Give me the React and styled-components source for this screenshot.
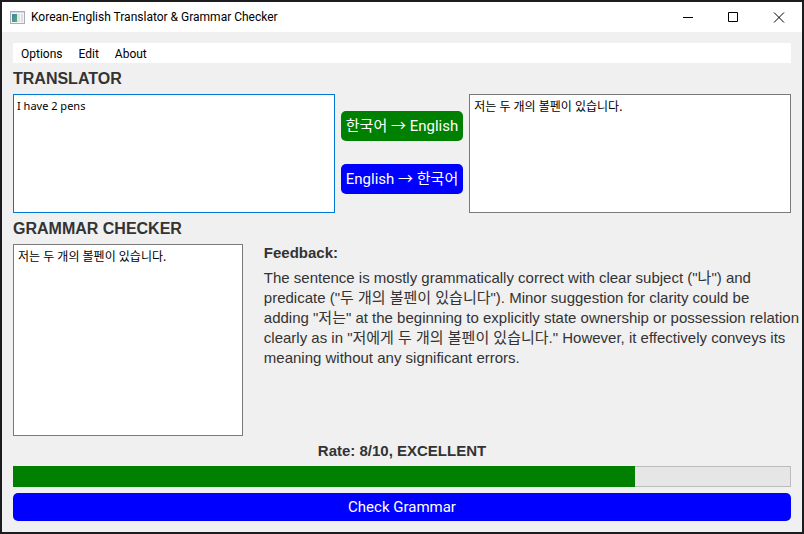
import React, { useState } from "react";
import styled, { createGlobalStyle } from "styled-components";

const uiFont = `Roboto, "Noto Sans CJK KR", sans-serif`;
const inputFont = `"Noto Sans", "Noto Sans CJK KR", sans-serif`;
const textFont = `"Liberation Sans", "Noto Sans CJK KR", sans-serif`;

const GlobalStyle = createGlobalStyle`
  * { box-sizing: border-box; }
  body { margin: 0; background: #1c1c1c; }
`;

const Desktop = styled.div`
  display: flex;
  min-height: 100vh;
  padding: 2px;
  background: #1c1b1d;
`;

const Window = styled.div`
  flex: 1;
  min-width: 0;
  display: flex;
  flex-direction: column;
  background: #f0f0f0;
  color: #000;
  font: 12px/16px ${uiFont};
`;

const TitleBar = styled.header`
  display: flex;
  align-items: center;
  height: 30px;
  padding-left: 8px;
  background: #fff;
`;

const Title = styled.h1`
  flex: 1;
  margin: 0 0 0 6px;
  font: 12px/16px ${uiFont};
`;

const CaptionButton = styled.button`
  display: grid;
  place-items: center;
  width: 45px;
  height: 30px;
  padding: 0;
  border: 0;
  background: transparent;
`;

const Content = styled.main`
  flex: 1;
  display: flex;
  flex-direction: column;
  padding: 11px;
`;

const MenuBar = styled.nav`
  display: flex;
  height: 20px;
  background: #fff;
`;

const MenuItem = styled.button`
  padding: 2px 8px 0;
  border: 0;
  background: #fff;
  color: #000;
  font: 12px/16px ${uiFont};
`;

const SectionTitle = styled.h2`
  margin: 0;
  padding: 6px 0 5px;
  color: #333;
  font: bold 16px/20px ${textFont};
`;

const TranslatorRow = styled.section`
  display: grid;
  grid-template-columns: minmax(0, 1fr) auto minmax(0, 1fr);
  gap: 6px;
  height: 119px;
`;

const Directions = styled.div`
  display: flex;
  flex-direction: column;
  justify-content: center;
  gap: 23px;
  padding-bottom: 2px;
`;

const TextBox = styled.textarea`
  display: block;
  width: 100%;
  height: 100%;
  padding: ${(p) => (p.$korean ? "4px 4px" : "3px 3px")};
  border: 1px solid ${(p) => (p.$active ? "#0078d7" : "#7a7a7a")};
  border-radius: 0;
  outline: 0;
  resize: none;
  background: #fff;
  color: #000;
  font: ${(p) => (p.$korean ? 12 : 11)}px/16px ${inputFont};
`;

const ActionButton = styled.button`
  height: ${(p) => (p.$tall ? 30 : 28)}px;
  padding: 4px 5px;
  border: 0;
  border-radius: 5px;
  background: ${(p) => p.$color};
  color: #fff;
  font: 15px/20px ${uiFont};
  white-space: nowrap;
`;

const GrammarRow = styled.section`
  flex: 1;
  display: grid;
  grid-template-columns: minmax(0, 3fr) minmax(0, 7fr);
  gap: 12px;
`;

const Feedback = styled.article`
  margin-right: -10px;
  padding-left: 9px;
  color: #333;
`;

const FeedbackTitle = styled.h3`
  margin: 0 0 6px;
  font: bold 15px/18px ${textFont};
`;

const FeedbackText = styled.p`
  margin: 0;
  font: 15px/20px ${textFont};
`;

const Rate = styled.label`
  padding: 5px 0;
  color: #333;
  text-align: center;
  font: bold 15px/20px ${textFont};
`;

const Score = styled.progress`
  appearance: none;
  display: block;
  width: 100%;
  height: 21px;
  margin-bottom: 6px;
  border: 0;
  &::-webkit-progress-bar {
    background: #e6e6e6;
    box-shadow: inset 0 0 0 1px #bcbcbc;
  }
  &::-webkit-progress-value {
    background: #008000;
  }
`;

const AppIcon = () => (
  <svg width="15" height="13" viewBox="0 0 15 13" aria-hidden="true">
    <defs>
      <linearGradient id="pane" x1="0" y1="0" x2="1" y2="1">
        <stop offset="0" stopColor="#3f7fae" />
        <stop offset="1" stopColor="#58b06a" />
      </linearGradient>
    </defs>
    <rect width="15" height="13" fill="#a9adb5" />
    <rect x="1" y="1" width="13" height="1" fill="#d5d9e0" />
    <rect x="1" y="2" width="13" height="10" fill="#f4f5f7" />
    <rect x="2" y="3" width="5" height="8" fill="url(#pane)" />
    <rect x="7" y="3" width="3" height="8" fill="#e2e4e8" />
    <rect x="11" y="3" width="2" height="8" fill="#d9dde0" />
  </svg>
);

const CaptionIcon = ({ d }) => (
  <svg width="13" height="11" viewBox="0 0 13 11" fill="none" stroke="#000" aria-hidden="true">
    <path d={d} />
  </svg>
);

const SENTENCE = "저는 두 개의 볼펜이 있습니다.";

export default function App() {
  const [source, setSource] = useState("I have 2 pens");
  const [target, setTarget] = useState(SENTENCE);
  const [checked, setChecked] = useState(SENTENCE);
  return (
    <Desktop>
      <GlobalStyle />
      <Window>
        <TitleBar>
          <AppIcon />
          <Title>Korean-English Translator &amp; Grammar Checker</Title>
          <CaptionButton aria-label="Minimize"><CaptionIcon d="M0 5.5H10" /></CaptionButton>
          <CaptionButton aria-label="Maximize"><CaptionIcon d="M.5 .5H9.5V9.5H.5Z" /></CaptionButton>
          <CaptionButton aria-label="Close"><CaptionIcon d="M1 .5L11 10.5M11 .5L1 10.5" /></CaptionButton>
        </TitleBar>
        <Content>
          <MenuBar>
            <MenuItem>Options</MenuItem>
            <MenuItem>Edit</MenuItem>
            <MenuItem>About</MenuItem>
          </MenuBar>
          <SectionTitle>TRANSLATOR</SectionTitle>
          <TranslatorRow>
            <TextBox $active spellCheck={false} aria-label="Text to translate" value={source} onChange={(e) => setSource(e.target.value)} />
            <Directions>
              <ActionButton $tall $color="#008000">한국어 → English</ActionButton>
              <ActionButton $tall $color="#0000ff">English → 한국어</ActionButton>
            </Directions>
            <TextBox $korean spellCheck={false} aria-label="Translation" value={target} onChange={(e) => setTarget(e.target.value)} />
          </TranslatorRow>
          <SectionTitle>GRAMMAR CHECKER</SectionTitle>
          <GrammarRow>
            <TextBox $korean spellCheck={false} aria-label="Text to check" value={checked} onChange={(e) => setChecked(e.target.value)} />
            <Feedback>
              <FeedbackTitle>Feedback:</FeedbackTitle>
              <FeedbackText>
                The sentence is mostly grammatically correct with clear subject ("나") and
                <br />
                predicate ("두 개의 볼펜이 있습니다"). Minor suggestion for clarity could be
                <br />
                adding "저는" at the beginning to explicitly state ownership or possession relation
                <br />
                clearly as in "저에게 두 개의 볼펜이 있습니다." However, it effectively conveys its
                <br />
                meaning without any significant errors.
              </FeedbackText>
            </Feedback>
          </GrammarRow>
          <Rate htmlFor="score">Rate: 8/10, EXCELLENT</Rate>
          <Score id="score" max="10" value="8" />
          <ActionButton $color="#0000ff">Check Grammar</ActionButton>
        </Content>
      </Window>
    </Desktop>
  );
}
